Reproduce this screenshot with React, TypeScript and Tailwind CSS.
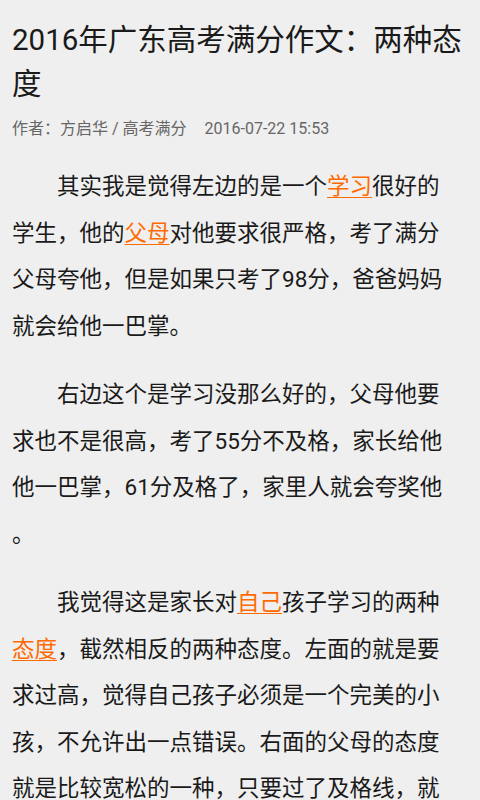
import React from 'react'

const Link = ({ children }: { children: React.ReactNode }) => (
  <span className="text-[#ff6a00] underline decoration-1 underline-offset-[3px]">{children}</span>
)

export default function App() {
  return (
    <div
      className="min-h-[800px] bg-[#efefef] px-3 pt-[18px] text-[#1a1a1a]"
      style={{ fontFamily: 'Roboto, "Noto Sans CJK SC", sans-serif' }}
    >
      <h1 className="text-[29.5px] leading-[44px] font-normal [line-break:anywhere]">
        2016年广东高考满分作文：两种态度
      </h1>
      <div className="mt-[11px] flex gap-[18px] text-[16px] leading-[24px] text-[#666]">
        <span>作者：方启华 / 高考满分</span>
        <span>2016-07-22 15:53</span>
      </div>
      <div className="mt-[22px] pr-[14px] text-[22.5px] leading-[46.5px] [line-break:anywhere]">
        <p className="indent-[2em]">
          其实我是觉得左边的是一个<Link>学习</Link>很好的学生，他的<Link>父母</Link>对他要求很严格，考了满分父母夸他，但是如果只考了98分，爸爸妈妈就会给他一巴掌。
        </p>
        <p className="mt-[22px] indent-[2em]">
          右边这个是学习没那么好的，父母他要求也不是很高，考了55分不及格，家长给他他一巴掌，61分及格了，家里人就会夸奖他。
        </p>
        <p className="mt-[22px] indent-[2em]">
          我觉得这是家长对<Link>自己</Link>孩子学习的两种<Link>态度</Link>，截然相反的两种态度。左面的就是要求过高，觉得自己孩子必须是一个完美的小孩，不允许出一点错误。右面的父母的态度就是比较宽松的一种，只要过了及格线，就会得到表扬。
        </p>
      </div>
    </div>
  )
}
